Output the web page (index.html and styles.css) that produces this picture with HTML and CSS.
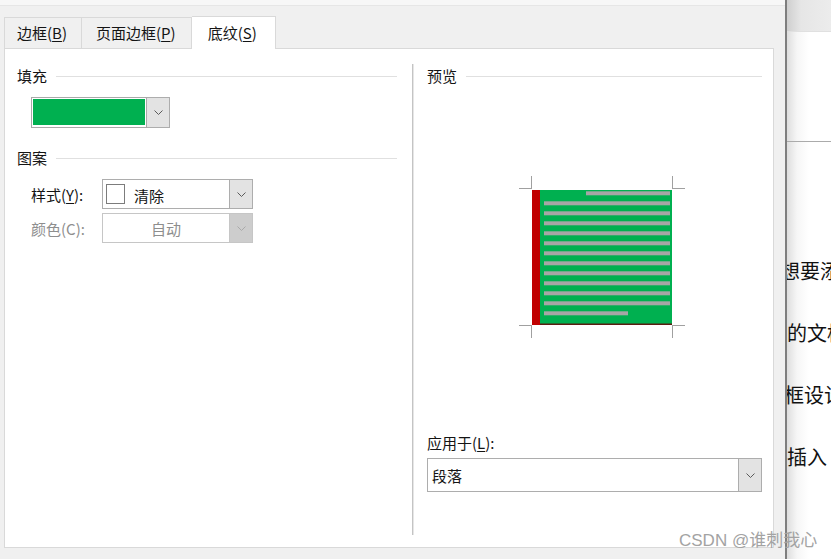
FILE: index.html
```html
<!DOCTYPE html>
<html lang="zh-CN">
<head>
<meta charset="utf-8">
<title>底纹</title>
<link rel="stylesheet" href="styles.css">
</head>
<body>
<div class="screen">
  <div class="dialog">
    <div class="topstrip"></div>
    <div class="tabs">
      <div class="tab t1">边框(<u>B</u>)</div>
      <div class="tab t2">页面边框(<u>P</u>)</div>
      <div class="tab t3 active">底纹(<u>S</u>)</div>
    </div>
    <div class="panel">
      <div class="col col-left">
        <div class="group-head">填充</div>
        <div class="fill-row">
          <div class="fill-swatch"><div class="fill-green"></div></div>
          <div class="drop-btn">
            <svg class="chev" width="9" height="5" viewBox="0 0 9 5"><polyline points="0.5,0.5 4.5,4.5 8.5,0.5"/></svg>
          </div>
        </div>
        <div class="group-head group-gap">图案</div>
        <div class="field-row first">
          <span class="field-label">样式(<u>Y</u>):</span>
          <div class="combo">
            <div class="combo-val"><span class="pat-box"></span><span class="pat-text">清除</span></div>
            <div class="combo-btn">
              <svg class="chev" width="9" height="5" viewBox="0 0 9 5"><polyline points="0.5,0.5 4.5,4.5 8.5,0.5"/></svg>
            </div>
          </div>
        </div>
        <div class="field-row disabled">
          <span class="field-label">颜色(C):</span>
          <div class="combo">
            <div class="combo-val center">自动</div>
            <div class="combo-btn">
              <svg class="chev" width="9" height="5" viewBox="0 0 9 5"><polyline points="0.5,0.5 4.5,4.5 8.5,0.5"/></svg>
            </div>
          </div>
        </div>
      </div>
      <div class="vdiv"></div>
      <div class="col col-right">
        <div class="group-head">预览</div>
        <svg class="preview" width="166" height="162" viewBox="0 0 166 162">
          <rect x="13" y="14" width="140" height="135" fill="#00b050"/>
          <rect x="13" y="14" width="8" height="135" fill="#c00000"/>
          <rect x="21" y="147.5" width="132" height="1.5" fill="#5a1c10"/>
          <g fill="#a6a6a6">
            <rect x="67" y="15.3" width="84" height="4"/>
            <rect x="25" y="25.3" width="126" height="4"/>
            <rect x="25" y="35.3" width="126" height="4"/>
            <rect x="25" y="45.3" width="126" height="4"/>
            <rect x="25" y="55.3" width="126" height="4"/>
            <rect x="25" y="65.3" width="126" height="4"/>
            <rect x="25" y="75.3" width="126" height="4"/>
            <rect x="25" y="85.3" width="126" height="4"/>
            <rect x="25" y="95.3" width="126" height="4"/>
            <rect x="25" y="105.3" width="126" height="4"/>
            <rect x="25" y="115.3" width="126" height="4"/>
            <rect x="25" y="125.3" width="126" height="4"/>
            <rect x="25" y="135.3" width="84" height="4"/>
          </g>
          <g stroke="#a0a0a0" stroke-width="1" fill="none">
            <path d="M12.5 0V13M0 12.5H13"/>
            <path d="M153.5 0V13M153 12.5H166"/>
            <path d="M0 149.5H13M12.5 149V162"/>
            <path d="M153 149.5H166M153.5 149V162"/>
          </g>
        </svg>
        <div class="apply-label">应用于(<u>L</u>):</div>
        <div class="combo wide">
          <div class="combo-val">段落</div>
          <div class="combo-btn">
            <svg class="chev" width="9" height="5" viewBox="0 0 9 5"><polyline points="0.5,0.5 4.5,4.5 8.5,0.5"/></svg>
          </div>
        </div>
      </div>
    </div>
  </div>
  <div class="doc">
    <div class="doc-head"></div>
    <div class="doc-band"></div>
    <div class="doc-text">
      <p class="l1">想要添加</p>
      <p>的文档中</p>
      <p class="l3">框设计</p>
      <p>插入</p>
    </div>
  </div>
  <div class="watermark">CSDN @谁刺我心</div>
</div>
</body>
</html>
```

FILE: styles.css
```css
* { box-sizing: border-box; }

body {
  margin: 0;
  font-family: "Noto Sans CJK SC", "Noto Sans", sans-serif;
  font-size: 15px;
  color: #141414;
}

u { text-decoration: underline; text-underline-offset: 2px; }

.screen {
  position: relative;
  width: 831px;
  height: 559px;
  display: flex;
  overflow: hidden;
  background: #f0f0f0;
}

.dialog {
  width: 785px;
  display: flex;
  flex-direction: column;
  background: #f0f0f0;
}

.topstrip {
  height: 6px;
  background: #f7f7f7;
  border-bottom: 1px solid #e6e6e6;
}

.tabs {
  height: 42px;
  display: flex;
  align-items: flex-end;
  padding-left: 4px;
}

.tab {
  height: 31px;
  line-height: 30px;
  border: 1px solid #d9d9d9;
  border-left: none;
  border-bottom: none;
  background: #f0f0f0;
  white-space: nowrap;
}

.tab.t1 { border-left: 1px solid #d9d9d9; padding: 0 14px 0 12px; }
.tab.t2 { padding: 0 15px 0 14px; }

.tab.active {
  height: 33px;
  line-height: 32px;
  margin-bottom: -1px;
  padding: 0 18px 0 16px;
  background: #ffffff;
  position: relative;
  z-index: 1;
}

.panel {
  height: 500px;
  margin: 0 11px 0 4px;
  background: #ffffff;
  border: 1px solid #d9d9d9;
  display: flex;
}

.col { display: flex; flex-direction: column; }

.col-left {
  width: 407px;
  padding: 17px 15px 0 12px;
}

.col-right {
  flex: 1;
  padding: 17px 11px 0 13px;
}

.vdiv {
  width: 2px;
  margin: 15px 0 12px;
  border-left: 1px solid #c4c4c4;
  background: #e6e6e6;
}

.group-head {
  display: flex;
  align-items: center;
  gap: 9px;
  height: 20px;
  line-height: 20px;
  white-space: nowrap;
}

.group-head::after {
  content: "";
  flex: 1;
  height: 1px;
  background: #e0e0e0;
}

.group-gap { margin-top: 20px; }

.fill-row {
  display: flex;
  margin: 11px 0 0 14px;
  height: 31px;
}

.fill-swatch {
  width: 116px;
  height: 31px;
  border: 1px solid #a9a9a9;
  padding: 1px 1px 2px 1px;
  background: #ffffff;
}

.fill-green {
  height: 100%;
  background: #00b050;
}

.drop-btn {
  width: 23px;
  height: 31px;
  border: 1px solid #adadad;
  border-left: none;
  background: #e3e3e3;
  display: flex;
  align-items: center;
  justify-content: center;
}

.chev polyline {
  fill: none;
  stroke: #5a5a5a;
  stroke-width: 1;
}

.field-row {
  display: flex;
  align-items: center;
  padding-left: 14px;
  margin-top: 4px;
}

.field-row.first { margin-top: 11px; }

.field-label {
  width: 71px;
  white-space: nowrap;
}

.combo {
  width: 151px;
  height: 30px;
  border: 1px solid #adadad;
  background: #ffffff;
  display: flex;
}

.combo-val {
  flex: 1;
  display: flex;
  align-items: center;
  padding-left: 3px;
  white-space: nowrap;
}

.combo-val.center { justify-content: center; padding-left: 0; }

.pat-box {
  width: 19px;
  height: 20px;
  border: 1px solid #7c7c7c;
  margin-right: 9px;
}

.pat-text { padding-top: 3px; }

.combo-btn {
  width: 23px;
  border-left: 1px solid #adadad;
  background: #e3e3e3;
  display: flex;
  align-items: center;
  justify-content: center;
}

.field-row.disabled .field-label { color: #8e8e8e; }
.field-row.disabled .combo { border-color: #c6c6c6; }
.field-row.disabled .combo-val { color: #8e8e8e; }
.field-row.disabled .combo-btn { background: #cdcdcd; border-left-color: #c6c6c6; }
.field-row.disabled .chev polyline { stroke: #a9a9a9; }

.preview {
  display: block;
  margin: 90px 0 0 92px;
}

.apply-label {
  margin-top: 95px;
  height: 20px;
  line-height: 20px;
}

.combo.wide {
  width: 100%;
  height: 34px;
  margin-top: 5px;
}

.combo.wide .combo-val { padding-left: 4px; }

.doc {
  flex: 1;
  border-left: 2px solid #7e7e7e;
  background: linear-gradient(to right, #dedede 0, #f6f6f6 10px, #ffffff 22px);
  overflow: hidden;
}

.doc-head {
  height: 32px;
  background: linear-gradient(to right, #cfcfcf, #e6e6e6 14px, #ececec);
  border-bottom: 1px solid #e0e0e0;
}

.doc-band {
  height: 110px;
  border-bottom: 1px solid #ababab;
}

.doc-text {
  padding: 98px 0 0 0;
  font-size: 20px;
  color: #111111;
}

.doc-text p {
  margin: 0;
  height: 62px;
  line-height: 62px;
  white-space: nowrap;
}

.doc-text .l1 { text-indent: -7px; }
.doc-text .l3 { text-indent: -3px; }

.watermark {
  position: absolute;
  left: 679px;
  top: 531px;
  font-family: "Liberation Sans", "Noto Sans CJK SC", sans-serif;
  font-size: 17px;
  line-height: 20px;
  color: #a3a3a3;
  white-space: nowrap;
}
```
